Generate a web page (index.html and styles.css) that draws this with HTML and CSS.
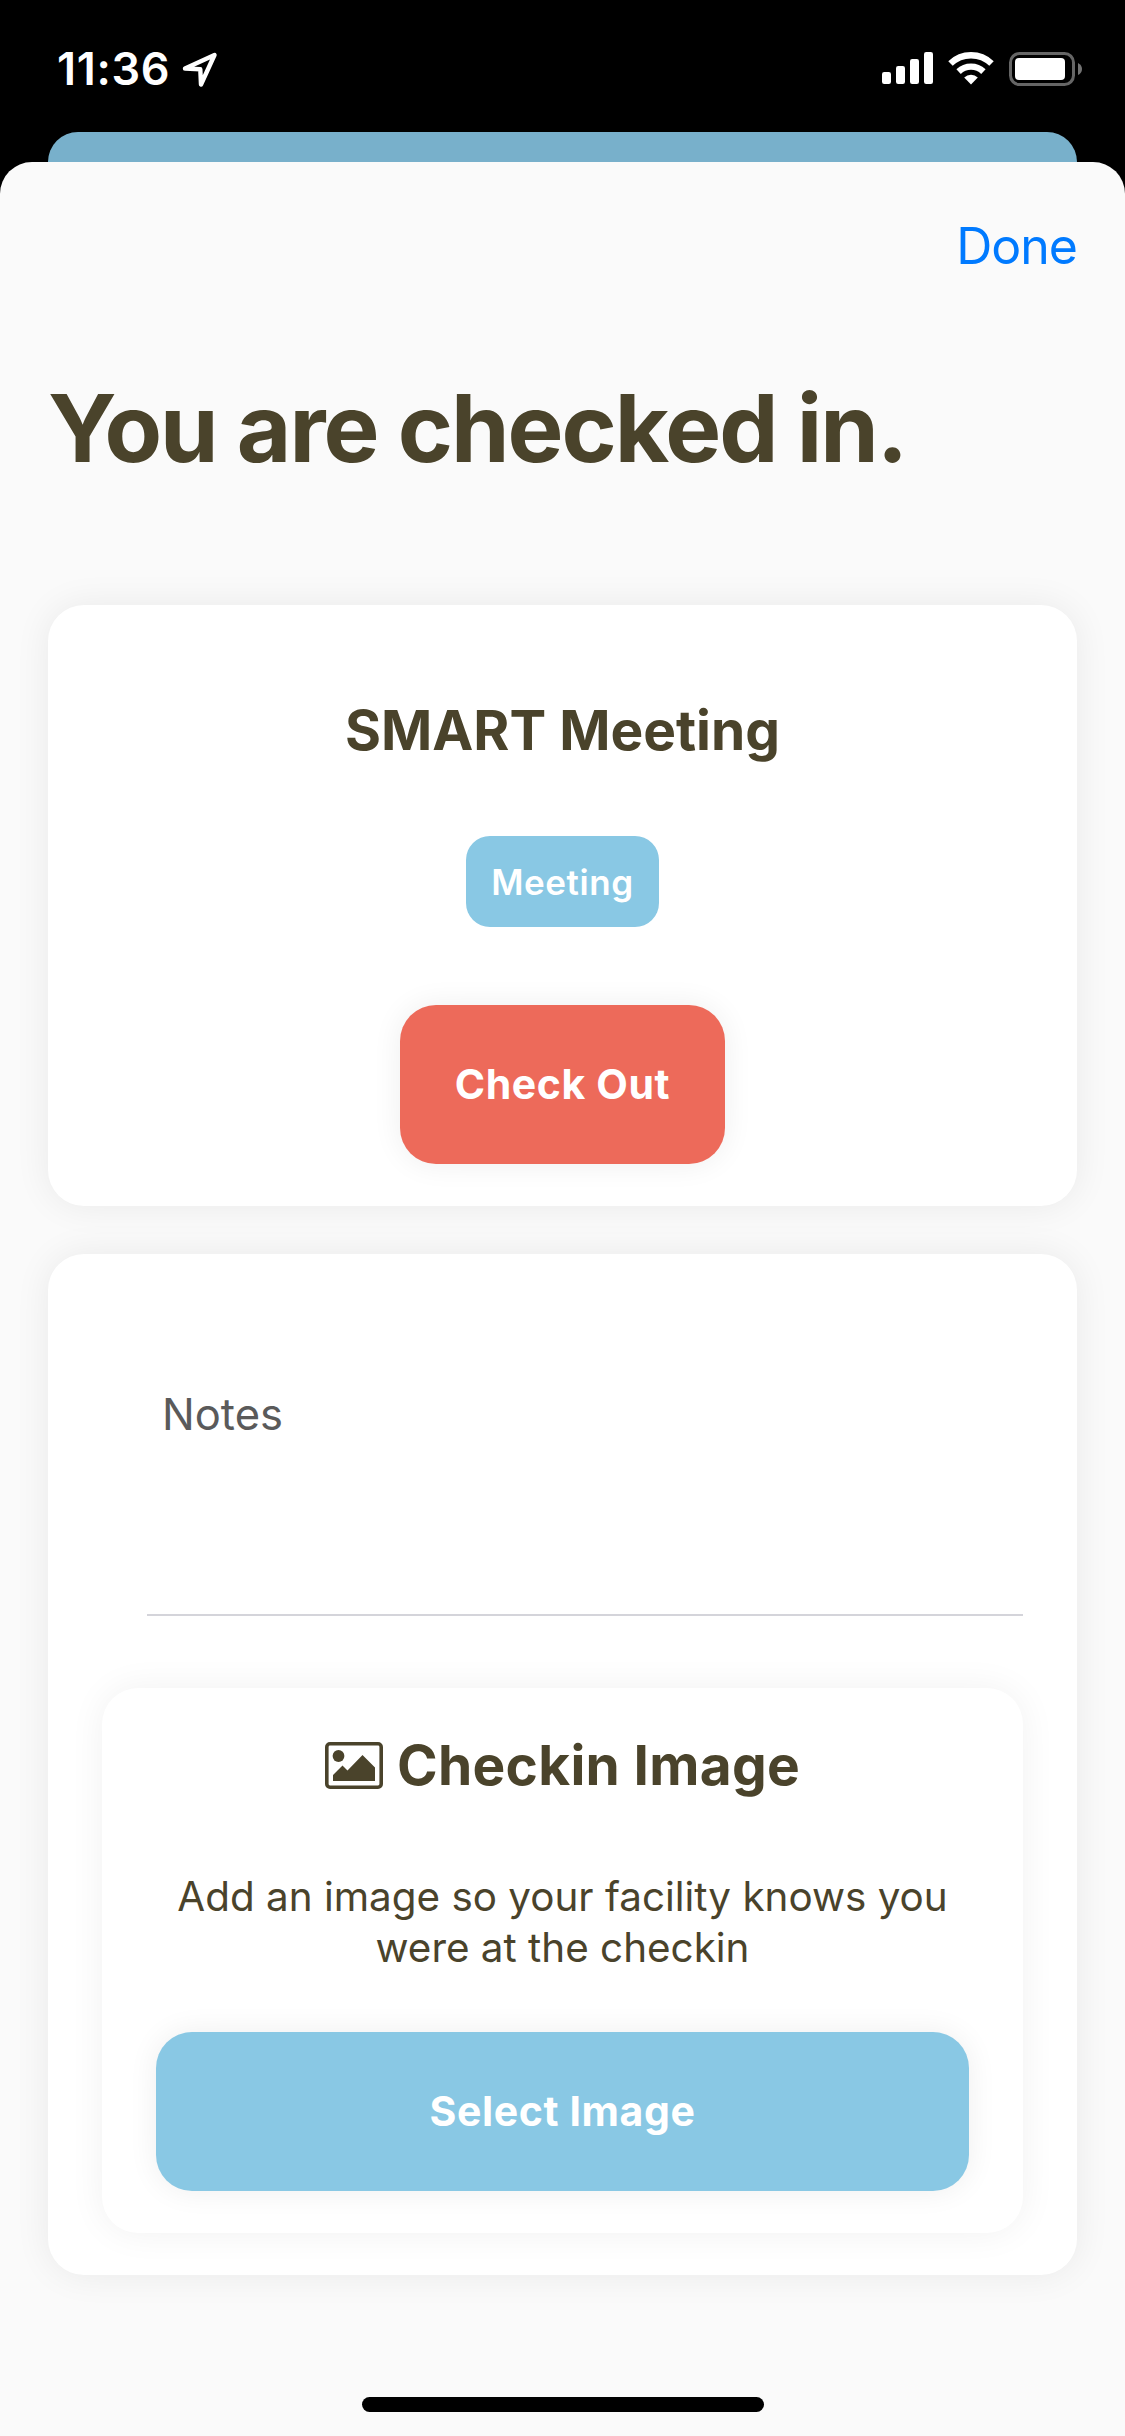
FILE: index.html
```html
<!DOCTYPE html>
<html lang="en">
<head>
    <meta charset="UTF-8">
    <meta name="viewport" content="width=device-width, initial-scale=1.0">
    <title>Check in</title>
    <link rel="stylesheet" href="styles.css">
</head>
<body>
    <header class="status">
        <div class="status__left">
            <span class="status__time">11:36</span>
            <svg class="status__location" width="36" height="36" viewBox="0 0 36 36">
                <path d="M3 16.5 L32.5 3 L19 32.5 L18.3 17.3 Z" fill="none" stroke="#fff" stroke-width="4.4" stroke-linejoin="round"/>
            </svg>
        </div>
        <div class="status__right">
            <svg width="51" height="33" viewBox="0 0 51 33" fill="#fff">
                <rect x="0" y="20" width="9" height="12" rx="2.2"/>
                <rect x="14" y="14" width="9" height="18" rx="2.2"/>
                <rect x="28" y="7" width="9" height="25" rx="2.2"/>
                <rect x="42" y="0" width="9" height="32" rx="2.2"/>
            </svg>
            <svg width="46" height="33" viewBox="0 0 46 33" fill="none" stroke="#fff">
                <path d="M2.5 11.5 A29.5 29.5 0 0 1 43.5 11.5" stroke-width="6.4"/>
                <path d="M10.6 19.6 A18 18 0 0 1 35.4 19.6" stroke-width="6.4"/>
                <path d="M16.2 25.6 A9.8 9.8 0 0 1 29.8 25.6 L23 32.6 Z" fill="#fff" stroke="none"/>
            </svg>
            <svg width="73" height="34" viewBox="0 0 73 34">
                <rect x="1.5" y="1.5" width="63" height="31" rx="9" fill="none" stroke="#666" stroke-width="3"/>
                <rect x="6" y="6" width="50" height="22" rx="4" fill="#fff"/>
                <path d="M69 11 Q73 13 73 17 Q73 21 69 23 Z" fill="#737373"/>
            </svg>
        </div>
    </header>

    <div class="backdrop"></div>

    <main class="sheet">
        <nav class="sheet__nav">
            <a class="sheet__done">Done</a>
        </nav>

        <h1 class="sheet__title">You are checked in.</h1>

        <section class="card meeting">
            <h2 class="heading">SMART Meeting</h2>
            <span class="meeting__tag">Meeting</span>
            <button class="button button--danger">Check Out</button>
        </section>

        <section class="card details">
            <div class="notes">
                <label class="notes__label">Notes</label>
            </div>

            <div class="card upload">
                <h2 class="heading upload__heading">
                    <svg class="upload__icon" width="58" height="47" viewBox="0 0 58 47">
                        <rect x="1.8" y="1.8" width="54.4" height="43.4" rx="3.2" fill="none" stroke="#4a432b" stroke-width="3.6"/>
                        <circle cx="13.5" cy="14" r="5.9" fill="#4a432b"/>
                        <path d="M8 33 L17.5 23.5 L22.5 28.5 L37.5 13 L50 25.5 V39 H8 Z" fill="#4a432b"/>
                    </svg>
                    <span>Checkin Image</span>
                </h2>
                <p class="upload__hint">Add an image so your facility knows you<br>were at the checkin</p>
                <button class="button button--primary">Select Image</button>
            </div>
        </section>

        <div class="sheet__indicator"></div>
    </main>
</body>
</html>
```

FILE: styles.css
```css
* {
    box-sizing: border-box;
}

body {
    margin: 0;
    width: 1125px;
    height: 2436px;
    display: flex;
    flex-direction: column;
    background-color: #000;
    color: #4a432b;
    font-family: Inter, "Liberation Sans", sans-serif;
    overflow: hidden;
}

h1, h2, p {
    margin: 0;
}

.status {
    height: 132px;
    padding: 52px 43px 0 57px;
    display: flex;
    justify-content: space-between;
    align-items: flex-start;
    color: #fff;
}

.status__left {
    display: flex;
}

.status__time {
    width: 125px;
    font-size: 45px;
    font-weight: 600;
    line-height: 34px;
    letter-spacing: 0.7px;
}

.status__right {
    display: flex;
    gap: 15px;
}

.backdrop {
    height: 60px;
    margin: 0 48px -30px;
    background-color: #78b0cb;
    border-radius: 30px 30px 0 0;
    flex-shrink: 0;
}

.sheet {
    flex: 1;
    padding: 0 48px;
    display: flex;
    flex-direction: column;
    background-color: #fafafa;
    border-radius: 32px 32px 0 0;
    z-index: 1;
}

.sheet__nav {
    height: 168px;
    padding-top: 54px;
    display: flex;
    justify-content: flex-end;
}

.sheet__done {
    color: #007aff;
    font-size: 50px;
    line-height: 60px;
    letter-spacing: -1px;
}

.sheet__title {
    height: 275px;
    padding-top: 40px;
    font-size: 94px;
    font-weight: 700;
    line-height: 116px;
    letter-spacing: -2px;
}

.card {
    display: flex;
    flex-direction: column;
    align-items: center;
    background-color: #fff;
    border-radius: 36px;
    box-shadow: 0 0 36px rgba(0, 0, 0, 0.07);
}

.heading {
    font-size: 55px;
    font-weight: 700;
    line-height: 66px;
}

.meeting {
    height: 601px;
    margin-bottom: 48px;
    padding-top: 92px;
}

.meeting__tag {
    width: 193px;
    height: 91px;
    margin: 73px 0 78px;
    border-radius: 24px;
    background-color: #89c8e4;
    color: #fff;
    font-size: 35px;
    font-weight: 600;
    line-height: 92px;
    letter-spacing: 0.6px;
    text-align: center;
}

.button {
    width: 100%;
    height: 159px;
    padding: 0 0 2px;
    border: none;
    border-radius: 36px;
    box-shadow: 0 0 30px rgba(0, 0, 0, 0.07);
    color: #fff;
    font-family: inherit;
    font-size: 41px;
    font-weight: 700;
    letter-spacing: 0.6px;
}

.button--danger {
    width: 325px;
    background-color: #ed6a5a;
}

.button--primary {
    background-color: #89c8e4;
}

.details {
    height: 1021px;
    padding: 54px 54px 42px;
    align-items: stretch;
}

.notes {
    height: 308px;
    margin-left: 45px;
    padding: 78px 15px 0;
    border-bottom: 2px solid #d4d4da;
    color: #5a5a5a;
}

.notes__label {
    font-size: 43.5px;
    line-height: 56px;
}

.upload {
    height: 545px;
    margin-top: 72px;
    padding: 44px 54px 0;
    box-shadow: 0 0 36px rgba(0, 0, 0, 0.06);
}

.upload__heading {
    display: flex;
    align-items: center;
    gap: 14px;
    letter-spacing: 0.3px;
}

.upload__hint {
    margin: 73px 0 59px;
    font-size: 40.4px;
    line-height: 51px;
    text-align: center;
    white-space: nowrap;
}

.sheet__indicator {
    width: 402px;
    height: 15px;
    margin: 122px auto 0;
    border-radius: 8px;
    background-color: #000;
}
```
